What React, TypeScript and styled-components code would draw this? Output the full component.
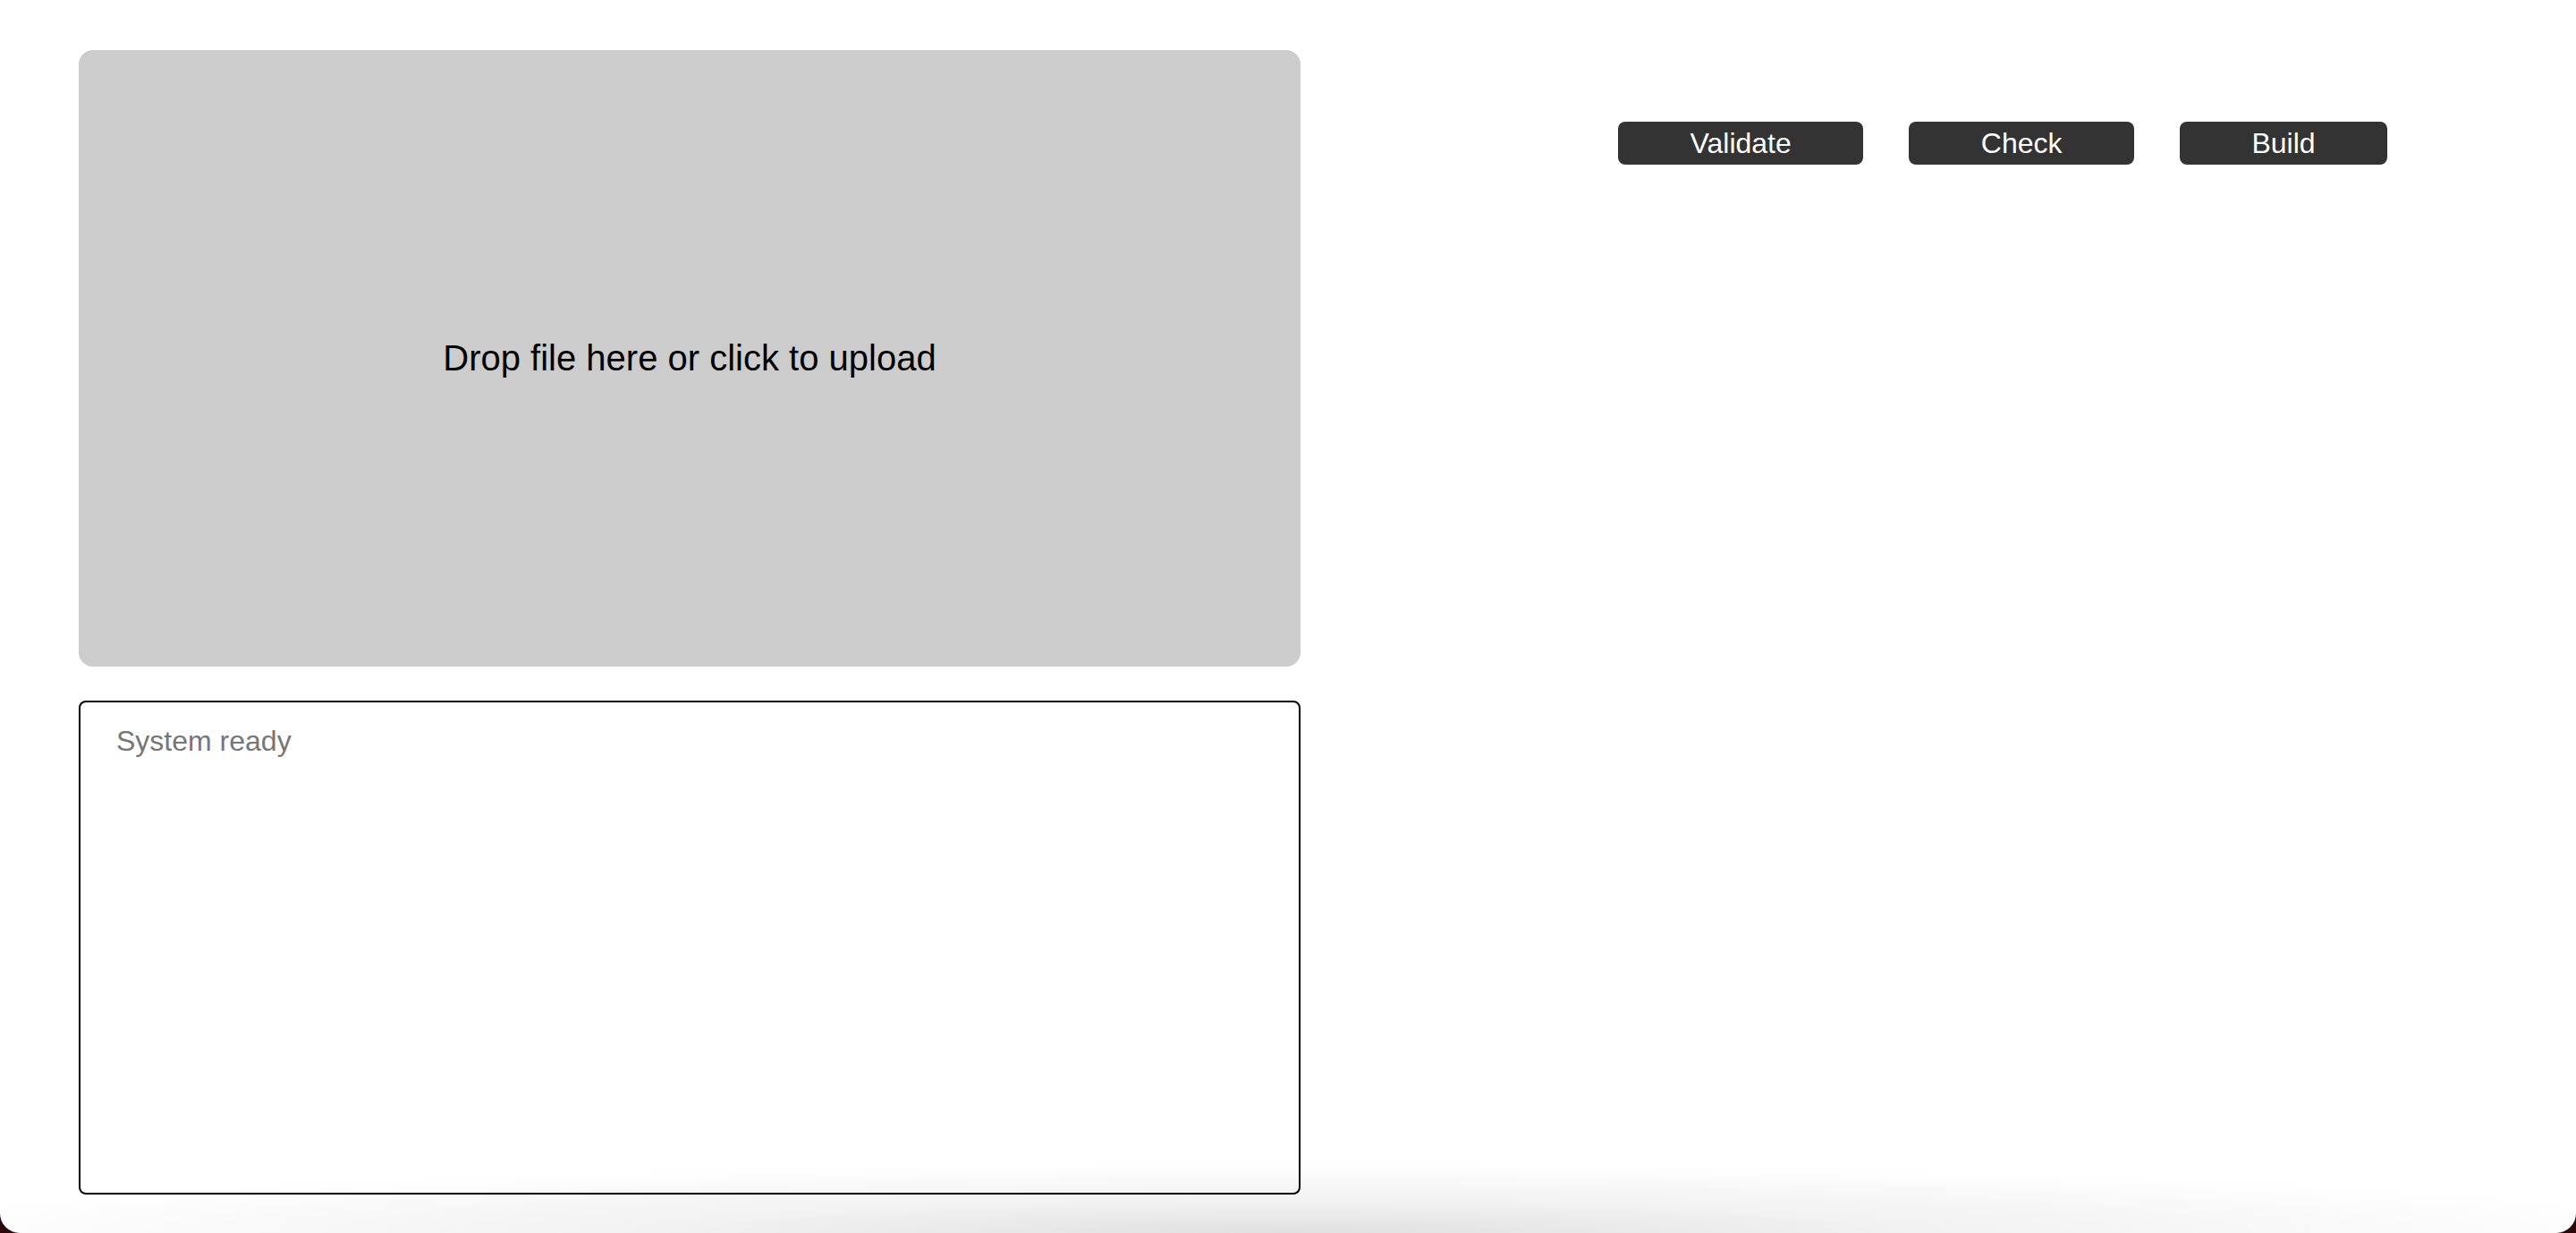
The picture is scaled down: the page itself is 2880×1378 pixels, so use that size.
import styled, { createGlobalStyle } from "styled-components";

const GlobalStyle = createGlobalStyle`
  html, body {
    margin: 0;
    padding: 0;
    background: #2b060b;
  }
  * {
    box-sizing: border-box;
  }
`;

function App() {
  return (
    <>
      <GlobalStyle />
      <Window>
        <Layout>
          <LeftColumn>
            <DropZone>Drop file here or click to upload</DropZone>
            <Console readOnly placeholder="System ready" />
          </LeftColumn>
          <Toolbar>
            <ActionButton>Validate</ActionButton>
            <ActionButton>Check</ActionButton>
            <ActionButton>Build</ActionButton>
          </Toolbar>
        </Layout>
      </Window>
    </>
  );
}

export default App;

const Window = styled.div`
  position: relative;
  width: 2880px;
  height: 1378px;
  background: #ffffff;
  border-radius: 0 0 22px 22px;
  overflow: hidden;
  font-family: "Liberation Sans", Arial, sans-serif;

  &::after {
    content: "";
    position: absolute;
    left: 0;
    right: 0;
    bottom: 0;
    height: 80px;
    pointer-events: none;
    background: radial-gradient(
      ellipse 55% 100% at 50% 100%,
      rgba(0, 0, 0, 0.12) 0%,
      rgba(0, 0, 0, 0.05) 45%,
      rgba(0, 0, 0, 0) 100%
    );
  }
`;

const Layout = styled.div`
  display: grid;
  grid-template-columns: 1366px 1fr;
  padding: 56px 88px 0 88px;
`;

const LeftColumn = styled.div`
  display: flex;
  flex-direction: column;
  gap: 38px;
`;

const DropZone = styled.div`
  display: flex;
  align-items: center;
  justify-content: center;
  height: 689px;
  background: #cccccc;
  border-radius: 16px;
  color: #000000;
  font-size: 40px;
  cursor: pointer;
`;

const Console = styled.textarea`
  display: block;
  width: 100%;
  height: 552px;
  margin: 0;
  padding: 25px 40px;
  border: 2px solid #000000;
  border-radius: 8px;
  background: #ffffff;
  font-family: "Liberation Sans", Arial, sans-serif;
  font-size: 32px;
  color: #222222;
  resize: none;
  outline: none;

  &::placeholder {
    color: #767676;
  }
`;

const Toolbar = styled.div`
  display: flex;
  align-items: flex-start;
  gap: 51px;
  padding: 80px 0 0 355px;
`;

const ActionButton = styled.button`
  height: 48px;
  padding: 0 80.5px;
  border: none;
  border-radius: 8px;
  background: #333333;
  color: #ffffff;
  font-family: "Liberation Sans", Arial, sans-serif;
  font-size: 32px;
  line-height: 48px;
  cursor: pointer;
`;
